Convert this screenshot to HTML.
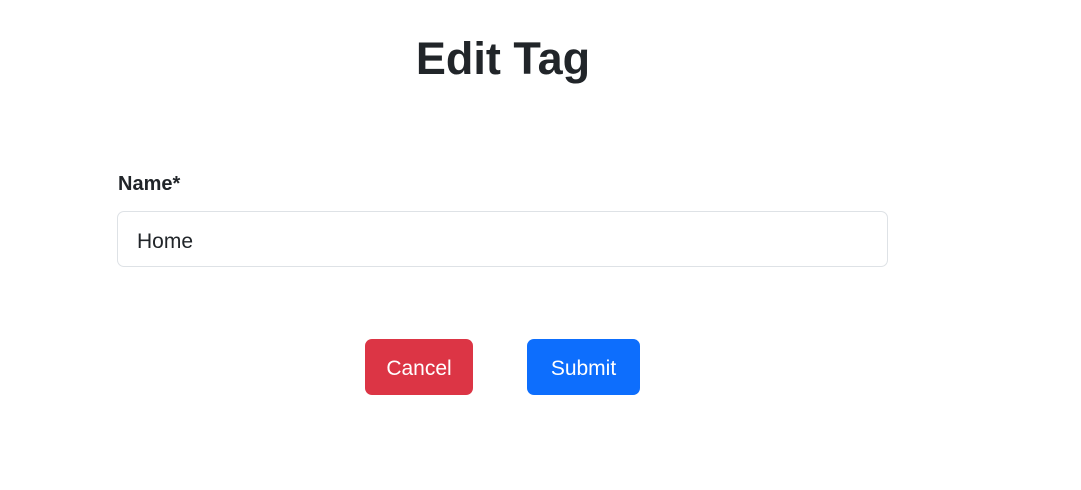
<!DOCTYPE html>
<html><head><style>
body{margin:0;width:1081px;height:490px;background:#fff;font-family:"Liberation Sans",sans-serif;color:#212529;position:relative;overflow:hidden}
h1{position:absolute;left:0;width:1006px;top:29px;margin:0;text-align:center;font-size:45px;font-weight:bold;line-height:60px}
.lbl{position:absolute;left:118px;top:171px;font-size:20px;font-weight:bold;line-height:26px}
.inp{position:absolute;left:117px;top:211px;width:769px;height:54px;border:1px solid #dee2e6;border-radius:7px;box-sizing:content-box}
.inp span{position:absolute;left:19px;top:17px;font-size:21px;line-height:26px}
.btn{position:absolute;top:339px;height:56px;border-radius:7px;color:#fff;font-size:21px;line-height:60px;text-align:center}
</style></head><body>
<h1>Edit Tag</h1>
<div class="lbl">Name*</div>
<div class="inp"><span>Home</span></div>
<div class="btn" style="left:365px;width:108px;background:#dc3545">Cancel</div>
<div class="btn" style="left:527px;width:113px;background:#0d6efd">Submit</div>
</body></html>
